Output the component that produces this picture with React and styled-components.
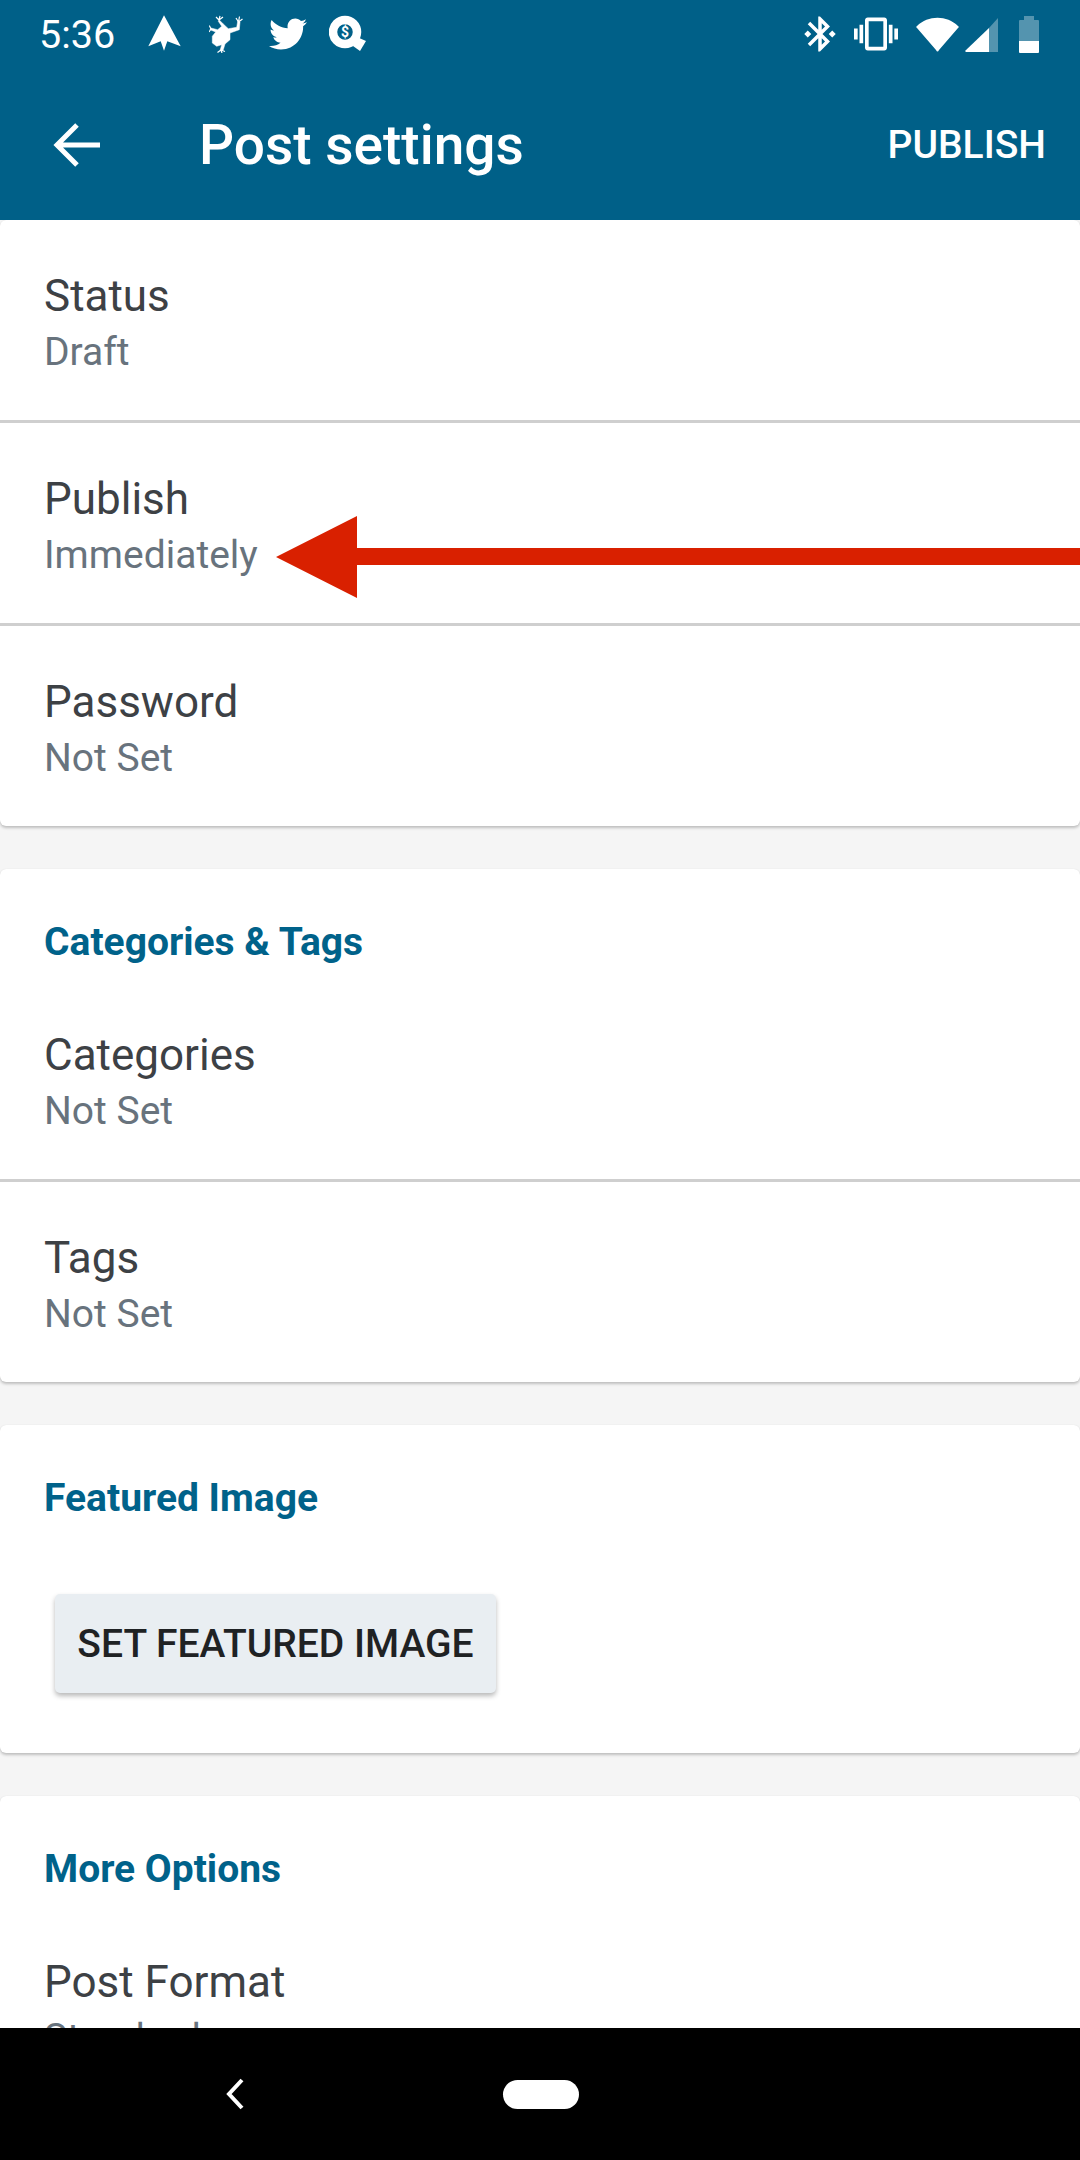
import React from "react";
import styled, { createGlobalStyle } from "styled-components";
import { FaTwitter } from "react-icons/fa";
import { MdBluetoothConnected, MdVibration } from "react-icons/md";

const GlobalStyle = createGlobalStyle`
  html, body {
    margin: 0;
    padding: 0;
    background: #f5f5f5;
  }
  * {
    box-sizing: border-box;
  }
`;

const Screen = styled.div`
  width: 1080px;
  height: 2160px;
  display: flex;
  flex-direction: column;
  overflow: hidden;
  font-family: Roboto, "Liberation Sans", sans-serif;
  background: #f5f5f5;
`;

const Header = styled.header`
  height: 220px;
  flex-shrink: 0;
  background: #006088;
  color: #fff;
  display: flex;
  flex-direction: column;
`;

const StatusBar = styled.div`
  height: 68px;
  display: flex;
  align-items: center;
  justify-content: space-between;
  padding: 0 41px 0 39px;
`;

const StatusGroup = styled.div`
  display: flex;
  align-items: center;
`;

const Time = styled.span`
  width: 108px;
  font-size: 39.5px;
`;

const IconSlot = styled.span`
  display: flex;
  width: ${(p) => p.$w}px;
  height: 38px;
  margin-left: ${(p) => p.$ml || 0}px;
  align-items: center;
  justify-content: center;
  font-size: ${(p) => p.$size || 38}px;

  svg {
    flex-shrink: 0;
  }
`;

const Toolbar = styled.div`
  flex: 1;
  display: flex;
  align-items: center;
  padding: 2px 34px 0 52px;
`;

const BackIcon = styled.svg`
  width: 50px;
  height: 50px;
  margin-right: 97px;
`;

const Title = styled.h1`
  flex: 1;
  margin: 0;
  font-size: 55px;
  font-weight: 500;
`;

const PublishButton = styled.button`
  border: none;
  background: none;
  padding: 0;
  color: #fff;
  font-family: inherit;
  font-size: 39px;
  font-weight: 500;
`;

const Content = styled.main`
  flex: 1;
  min-height: 0;
  overflow: hidden;
  display: flex;
  flex-direction: column;
  gap: 43px;
`;

const Card = styled.section`
  flex-shrink: 0;
  background: #fff;
  border-radius: 6px;
  box-shadow: 0 2px 3px rgba(0, 0, 0, 0.22), 0 0 1px rgba(0, 0, 0, 0.1);
`;

const SectionTitle = styled.h2`
  height: 110px;
  margin: 0;
  padding: 47px 44px 0;
  font-size: 39px;
  line-height: 52px;
  font-weight: 700;
  color: #00628a;
`;

const Row = styled.div`
  position: relative;
  height: ${(p) => (p.$divided ? 203 : 200)}px;
  padding: 48px 44px 0;
  border-top: ${(p) => (p.$divided ? "3px solid #cfcfcf" : "none")};
`;

const RowLabel = styled.div`
  font-size: 44px;
  line-height: 56px;
  color: #3d4145;
`;

const RowValue = styled.div`
  font-size: 39px;
  line-height: 56px;
  color: #68737d;
`;

const ArrowOverlay = styled.svg`
  position: absolute;
  left: 276px;
  top: 93px;
  width: 804px;
  height: 82px;
`;

const ImageButton = styled.button`
  display: block;
  width: 441px;
  height: 99px;
  margin: 59px 0 60px 55px;
  padding: 0;
  border: none;
  border-radius: 5px;
  background: #e9eef2;
  color: #1f2224;
  font-family: inherit;
  font-size: 39px;
  font-weight: 500;
  box-shadow: 0 3px 5px rgba(0, 0, 0, 0.28);
`;

const NavBar = styled.nav`
  height: 132px;
  flex-shrink: 0;
  background: #000;
  display: flex;
  align-items: center;
  padding: 0 0 0 224px;
`;

const NavBack = styled.svg`
  width: 22px;
  height: 32px;
  margin-right: 257px;
`;

const HomePill = styled.div`
  width: 76px;
  height: 29px;
  border-radius: 15px;
  background: #fff;
`;

function NavArrow() {
  return (
    <svg width="34" height="38" viewBox="0 0 34 38">
      <path d="M17 .3 L33.7 31.3 L20.3 26.3 L17 35.7 L13.7 26.3 L1.3 31.3 Z" fill="#fff" />
    </svg>
  );
}

function Frog() {
  return (
    <svg width="34" height="38" viewBox="0 0 34 38" fill="#fff" stroke="#fff" strokeLinejoin="round">
      <path
        strokeWidth="0.5"
        d="M10 4.7 L14.3 9 L19.3 13.7 L27.7 12.3 L28.7 6.3 L31 7 L30.3 14.7 L21 18 L21 24.7 L16 29 L14.3 34.7 L11 35.7 L12.7 29.7 L7.7 31.3 L3.3 28 L3.3 21.3 L6.7 17 L1 14.7 L2 13 L8.7 14.7 L12.7 11.3 L9.3 6.3 Z"
      />
      <path
        fill="none"
        strokeWidth="1.2"
        d="M10 5 L7 2 M10 5 L11 .8 M10 5 L14 2 M29.5 7 L27 3 M29.5 7 L30.5 1.5 M29.5 7 L33.5 4 M2 14 L.3 10.5 M2 14 L0 17 M12 35 L8.5 37.5 M12 35 L13 38 M12 35 L16 36.5"
      />
    </svg>
  );
}

function QMark() {
  return (
    <svg width="38" height="38" viewBox="0 0 38 38">
      <path d="M37 26 L31 36 L24 31 L28 22 Z" fill="#fff" />
      <circle cx="16" cy="17" r="12" fill="none" stroke="#fff" strokeWidth="8.5" />
      <text x="16" y="22" textAnchor="middle" fontSize="14" fontWeight="700" fill="#fff" fontFamily="Roboto, sans-serif">$</text>
    </svg>
  );
}

function Wifi() {
  return (
    <svg width="43" height="35" viewBox="0 0 43 35">
      <path d="M1 9 C12 -2 31 -2 42 9 C43 10 43 10 42 11 L23 33 C22 35 21 35 20 33 L1 11 C0 10 0 10 1 9 Z" fill="#fff" />
    </svg>
  );
}

function Signal() {
  return (
    <svg width="33" height="35" viewBox="0 0 33 35">
      <path d="M0 34 L24 11 L24 35 L1 35 Z" fill="#fff" />
      <path d="M24 11 L33 1 L33 35 L24 35 Z" fill="#fff" opacity="0.33" />
    </svg>
  );
}

function Battery() {
  return (
    <svg width="20" height="37" viewBox="0 0 20 37">
      <path d="M5 0 H15 V4 H19 Q20 4 20 5 V25 H0 V5 Q0 4 1 4 H5 Z" fill="#fff" opacity="0.33" />
      <path d="M0 25 H20 V36 Q20 37 19 37 H1 Q0 37 0 36 Z" fill="#fff" />
    </svg>
  );
}

function App() {
  return (
    <Screen>
      <GlobalStyle />
      <Header>
        <StatusBar>
          <StatusGroup>
            <Time>5:36</Time>
            <IconSlot $w={34}><NavArrow /></IconSlot>
            <IconSlot $w={34} $ml={28}><Frog /></IconSlot>
            <IconSlot $w={38} $ml={26} $size={38}><FaTwitter /></IconSlot>
            <IconSlot $w={38} $ml={22}><QMark /></IconSlot>
          </StatusGroup>
          <StatusGroup>
            <IconSlot $w={30} $size={42}><MdBluetoothConnected /></IconSlot>
            <IconSlot $w={44} $ml={19} $size={44}><MdVibration /></IconSlot>
            <IconSlot $w={43} $ml={18}><Wifi /></IconSlot>
            <IconSlot $w={33} $ml={6}><Signal /></IconSlot>
            <IconSlot $w={20} $ml={21}><Battery /></IconSlot>
          </StatusGroup>
        </StatusBar>
        <Toolbar>
          <BackIcon viewBox="0 0 50 50" fill="none" stroke="#fff" strokeWidth="5">
            <path d="M48 25 H6 M25 5 L5 25 L25 45" />
          </BackIcon>
          <Title>Post settings</Title>
          <PublishButton>PUBLISH</PublishButton>
        </Toolbar>
      </Header>
      <Content>
        <Card>
          <Row>
            <RowLabel>Status</RowLabel>
            <RowValue>Draft</RowValue>
          </Row>
          <Row $divided>
            <RowLabel>Publish</RowLabel>
            <RowValue>Immediately</RowValue>
            <ArrowOverlay viewBox="0 0 804 82">
              <path d="M0 41 L81 0 L81 32 L804 32 L804 49 L81 49 L81 82 Z" fill="#d92000" />
            </ArrowOverlay>
          </Row>
          <Row $divided>
            <RowLabel>Password</RowLabel>
            <RowValue>Not Set</RowValue>
          </Row>
        </Card>
        <Card>
          <SectionTitle>Categories &amp; Tags</SectionTitle>
          <Row>
            <RowLabel>Categories</RowLabel>
            <RowValue>Not Set</RowValue>
          </Row>
          <Row $divided>
            <RowLabel>Tags</RowLabel>
            <RowValue>Not Set</RowValue>
          </Row>
        </Card>
        <Card>
          <SectionTitle>Featured Image</SectionTitle>
          <ImageButton>SET FEATURED IMAGE</ImageButton>
        </Card>
        <Card>
          <SectionTitle>More Options</SectionTitle>
          <Row>
            <RowLabel>Post Format</RowLabel>
            <RowValue>Standard</RowValue>
          </Row>
        </Card>
      </Content>
      <NavBar>
        <NavBack viewBox="0 0 22 32" fill="none" stroke="#fff" strokeWidth="4">
          <path d="M18 2 L5 16 L18 30" />
        </NavBack>
        <HomePill />
      </NavBar>
    </Screen>
  );
}

export default App;
